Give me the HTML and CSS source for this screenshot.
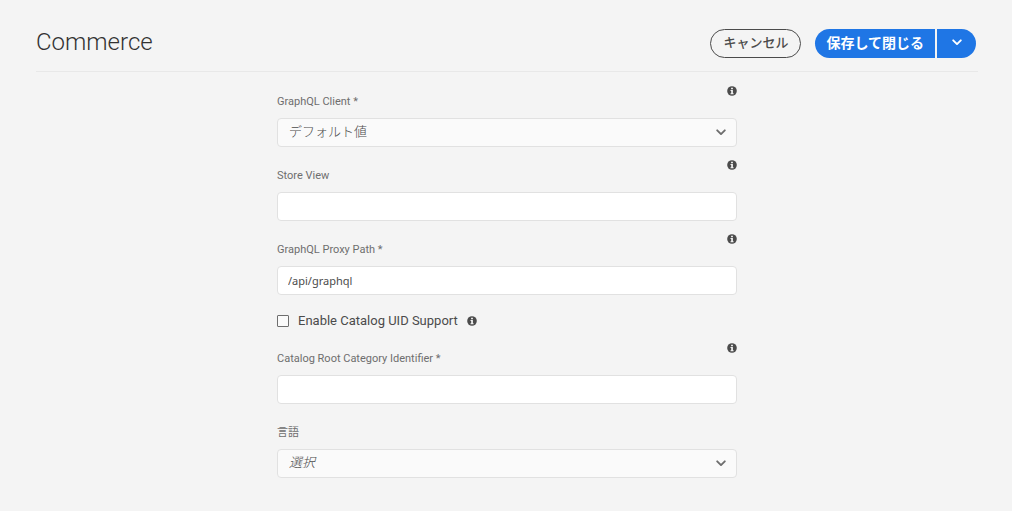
FILE: index.html
```html
<!DOCTYPE html>
<html lang="ja">
<head>
<meta charset="utf-8">
<meta name="viewport" content="width=device-width, initial-scale=1">
<title>Commerce</title>
<link rel="stylesheet" href="styles.css">
</head>
<body>
<svg class="sprite" aria-hidden="true">
  <symbol id="info" viewBox="0 0 10 10">
    <circle cx="5" cy="5" r="4.8" fill="#4b4b4b"/>
    <path d="M4.1 1.7h1.8v1.5H4.1zM3.5 4.1h2.4v3.1h.7v1H3.5v-1h.7V5.1h-.7z" fill="#f4f4f4"/>
  </symbol>
  <symbol id="chevron" viewBox="0 0 10 7">
    <path d="M1.2 1.3 5 5.1l3.8-3.8" fill="none" stroke="currentColor" stroke-width="1.9" stroke-linecap="round" stroke-linejoin="round"/>
  </symbol>
</svg>
<header class="header">
  <h1 class="title">Commerce</h1>
  <div class="actions">
    <button class="button button-cancel" type="button">キャンセル</button>
    <div class="button-group">
      <button class="button button-save" type="submit" form="commerce">保存して閉じる</button>
      <button class="button button-more" type="button" aria-label="その他"><svg class="chevron"><use href="#chevron"/></svg></button>
    </div>
  </div>
</header>
<main class="main">
  <form class="form" id="commerce">
    <div class="field">
      <div class="field-head">
        <label class="label" for="client">GraphQL Client *</label>
        <svg class="info"><use href="#info"/></svg>
      </div>
      <div class="select-wrap">
        <select class="control select" id="client"><option>デフォルト値</option></select>
        <svg class="chevron select-arrow"><use href="#chevron"/></svg>
      </div>
    </div>
    <div class="field">
      <div class="field-head">
        <label class="label" for="store">Store View</label>
        <svg class="info"><use href="#info"/></svg>
      </div>
      <input class="control" id="store" type="text">
    </div>
    <div class="field">
      <div class="field-head">
        <label class="label" for="proxy">GraphQL Proxy Path *</label>
        <svg class="info"><use href="#info"/></svg>
      </div>
      <input class="control" id="proxy" type="text" value="/api/graphql">
    </div>
    <div class="check-row">
      <input class="checkbox" id="uid" type="checkbox">
      <label class="check-label" for="uid">Enable Catalog UID Support</label>
      <svg class="info"><use href="#info"/></svg>
    </div>
    <div class="field">
      <div class="field-head">
        <label class="label" for="root">Catalog Root Category Identifier *</label>
        <svg class="info"><use href="#info"/></svg>
      </div>
      <input class="control" id="root" type="text">
    </div>
    <div class="field">
      <div class="field-head">
        <label class="label" for="language">言語</label>
      </div>
      <div class="select-wrap">
        <select class="control select select-empty" id="language"><option>選択</option></select>
        <svg class="chevron select-arrow"><use href="#chevron"/></svg>
      </div>
    </div>
  </form>
</main>
</body>
</html>
```
FILE: styles.css
```css
* { box-sizing: border-box; }
body {
  margin: 0;
  background: #f4f4f4;
  color: #4b4b4b;
  font-family: Roboto, "Noto Sans CJK JP", sans-serif;
}
.sprite { position: absolute; width: 0; height: 0; }
.header {
  display: flex;
  align-items: center;
  justify-content: space-between;
  height: 72px;
  margin: 0 34px 0 36px;
  padding: 16px 2px 0 0;
  border-bottom: 1px solid #e8e8e8;
}
.title {
  margin: 0;
  padding-bottom: 4px;
  font-size: 24px;
  font-weight: 300;
  line-height: 32px;
  color: #323232;
}
.actions { display: flex; gap: 14px; }
.button-group { display: flex; gap: 2px; }
.button {
  height: 29px;
  padding: 0 11px 3px;
  border: 0;
  font-family: "Noto Sans CJK JP", sans-serif;
  font-size: 14px;
  font-weight: 700;
  line-height: 20px;
}
.button-cancel {
  padding: 0 12px 3px;
  border: 1px solid #4b4b4b;
  border-radius: 15px;
  background: transparent;
  color: #4b4b4b;
  font-size: 13px;
  font-weight: 500;
}
.button-save {
  border-radius: 15px 0 0 15px;
  background: #1f76e5;
  color: #fff;
}
.button-more {
  display: flex;
  align-items: center;
  justify-content: center;
  width: 39px;
  border-radius: 0 15px 15px 0;
  background: #1f76e5;
  color: #fff;
}
.chevron { display: block; width: 10px; height: 7px; }
.main { padding-left: 2px; }
.form {
  display: flex;
  flex-direction: column;
  gap: 9px;
  width: calc(100% - 40px);
  max-width: 460px;
  margin: 10px auto 32px;
}
.field-head {
  display: flex;
  justify-content: space-between;
  height: 36px;
}
.label {
  padding-top: 12px;
  font-size: 11px;
  line-height: 16px;
  color: #6e6e6e;
}
.info { display: block; flex: none; width: 10px; height: 10px; }
.field-head .info { margin-top: 4px; }
.control {
  display: block;
  width: 100%;
  height: 29px;
  padding: 0 10px;
  border: 1px solid #e1e1e1;
  border-radius: 4px;
  background: #fff;
  color: #4b4b4b;
  font-family: "Noto Sans", "Noto Sans CJK JP", sans-serif;
  font-size: 11px;
}
.select-wrap { position: relative; }
.select {
  appearance: none;
  padding: 0 30px 4px 11px;
  background: #fafafa;
  font-family: "Noto Sans CJK JP", sans-serif;
  font-size: 13px;
  font-weight: 300;
}
.select-empty { font-style: italic; }
.select-arrow {
  position: absolute;
  top: 11px;
  right: 11px;
  color: #6e6e6e;
  pointer-events: none;
}
.check-row {
  display: flex;
  align-items: center;
  gap: 9px;
  padding-top: 8px;
}
.checkbox {
  appearance: none;
  width: 12px;
  height: 12px;
  margin: 0;
  border: 1px solid #6e6e6e;
  border-radius: 1px;
  background: #fafafa;
}
.checkbox:checked { background: #1f76e5; }
.check-label { font-size: 13px; line-height: 18px; }
```
